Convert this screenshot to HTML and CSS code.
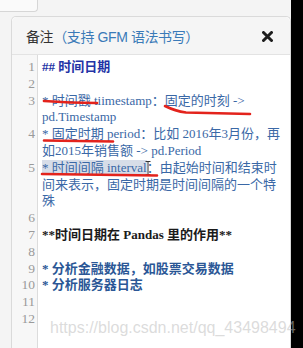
FILE: index.html
```html
<!DOCTYPE html>
<html>
<head>
<meta charset="utf-8">
<link rel="stylesheet" href="styles.css">
</head>
<body>
<div class="page">
  <div class="main">
    <div class="topbox"></div>
    <div class="dialog">
      <div class="header">
        <div class="title">备注<span class="hint">（支持 GFM 语法书写）</span></div>
        <svg class="close" width="11" height="11" viewBox="0 0 11 11"><path d="M1.5 1.5 L9.5 9.5 M9.5 1.5 L1.5 9.5" stroke="#1e1e1e" stroke-width="3" stroke-linecap="round"/></svg>
      </div>
      <div class="editor">
        <div class="line"><span class="ln">1</span><div class="txt h">## 时间日期</div></div>
        <div class="line"><span class="ln">2</span><div class="txt"></div></div>
        <div class="line"><span class="ln">3</span><div class="txt li">* 时间戳 tiimestamp：固定的时刻 -&gt;<br>pd.Timestamp</div></div>
        <div class="line"><span class="ln">4</span><div class="txt li">* 固定时期 period：比如 2016年3月份，再<br>如2015年销售额 -&gt; pd.Period</div></div>
        <div class="line"><span class="ln">5</span><div class="txt li cur"><span class="sel">* 时间间隔 interval</span>：由起始时间和结束时<br>间来表示，固定时期是时间间隔的一个特<br>殊<svg class="ibeam" width="6" height="14" viewBox="0 0 6 14"><path d="M0.5 0.5 H5.5 M3 0.5 V13.5 M0.5 13.5 H5.5" stroke="#333" stroke-width="1" fill="none"/></svg></div></div>
        <div class="line"><span class="ln">6</span><div class="txt"></div></div>
        <div class="line"><span class="ln">7</span><div class="txt b">**时间日期在 Pandas 里的作用**</div></div>
        <div class="line"><span class="ln">8</span><div class="txt"></div></div>
        <div class="line"><span class="ln">9</span><div class="txt li2">* 分析金融数据，如股票交易数据</div></div>
        <div class="line"><span class="ln">10</span><div class="txt li2">* 分析服务器日志</div></div>
        <div class="line"><span class="ln">11</span><div class="txt"></div></div>
        <div class="line"><span class="ln">12</span><div class="txt"></div></div>
      </div>
    </div>
  </div>
  <div class="black"></div>
  <svg class="marks" width="303" height="348" viewBox="0 0 303 348">
    <g stroke="#e3231c" stroke-width="2.6" fill="none" stroke-linecap="round" stroke-linejoin="round">
      <path d="M44 101 Q70 103 97 103"/>
      <path d="M165 106 Q175 111 186 112.5 L250 114"/>
      <path d="M44 140.5 Q80 141 113 141.5"/>
      <path d="M42 174 Q100 175 157 175.5"/>
    </g>
  </svg>
  <div class="watermark">https://blog.csdn.net/qq_43498494</div>
</div>
</body>
</html>
```
FILE: styles.css
```css
html, body {
  margin: 0;
  padding: 0;
}
body {
  width: 303px;
  height: 348px;
  overflow: hidden;
}
.page {
  position: relative;
  display: grid;
  grid-template-columns: 291px 12px;
  height: 348px;
  overflow: hidden;
  background: #f4f4f4;
}
.main {
  display: flex;
  flex-direction: column;
  min-width: 0;
}
.black {
  background: #000;
}
.topbox {
  width: 37px;
  height: 11px;
  margin-left: -1px;
  border: 1px solid #d6d6d6;
  border-top: none;
  border-bottom-right-radius: 4px;
  background: #fafafa;
}
.dialog {
  margin: 4px 0 0 11px;
  flex: 1;
  border: 1px solid #dadada;
  border-bottom: none;
  border-radius: 5px 5px 0 0;
  background: #fff;
  display: flex;
  flex-direction: column;
}
.header {
  height: 37px;
  display: flex;
  align-items: center;
  justify-content: space-between;
  padding: 0 17px 0 14px;
  background: #f5f5f5;
  border-bottom: 1px solid #e3e3e3;
  border-radius: 5px 5px 0 0;
}
.title {
  font-family: "Liberation Sans", "Noto Sans CJK SC", sans-serif;
  font-size: 14px;
  color: #333;
  letter-spacing: -0.4px;
  margin-top: 1px;
}
.hint {
  color: #3a7ab8;
}
.close {
  display: block;
  margin-top: 1px;
}
.editor {
  flex: 1;
  padding-top: 4px;
  background: linear-gradient(to right, #f7f7f7 0 25px, #dcdcdc 25px 26px, #fff 26px);
}
.line {
  display: grid;
  grid-template-columns: 26px 1fr;
  font-size: 13px;
  line-height: 16.8px;
}
.ln {
  font-family: "Liberation Serif", serif;
  color: #9a9a9a;
  text-align: right;
  padding-right: 3px;
  font-size: 13.5px;
}
.txt {
  padding-left: 4px;
  font-family: "Liberation Serif", "Noto Sans CJK SC", serif;
  white-space: nowrap;
  min-height: 16.8px;
  position: relative;
}
.h {
  color: #2433a6;
  font-weight: bold;
}
.li {
  color: #3a68a6;
}
.li2 {
  color: #2b5796;
  font-weight: bold;
}
.b {
  color: #1a1a1a;
  font-weight: bold;
}
.sel {
  background: #d7dde8;
}
.ibeam {
  position: absolute;
  left: 107px;
  top: 1px;
}
.marks {
  position: absolute;
  left: 0;
  top: 0;
  pointer-events: none;
}
.watermark {
  position: absolute;
  left: 50px;
  top: 319px;
  font-family: "Liberation Sans", sans-serif;
  font-size: 16px;
  line-height: 18px;
  color: rgba(190, 190, 190, 0.55);
  white-space: nowrap;
}
```
